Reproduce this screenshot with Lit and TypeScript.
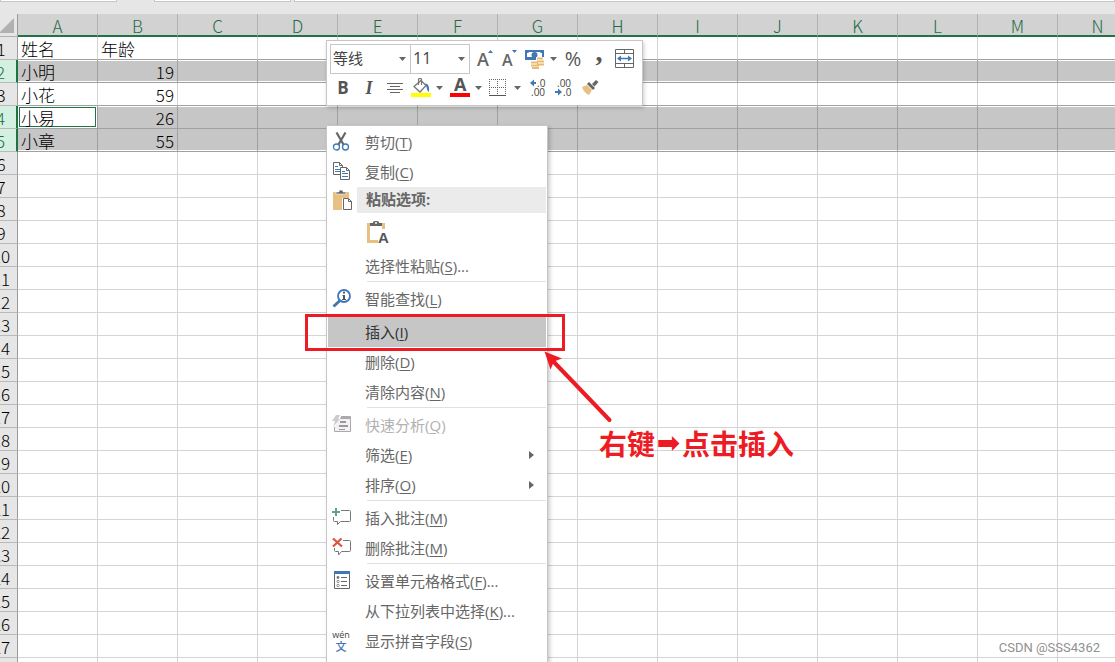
import { LitElement, html, css, svg, nothing } from 'lit';
import { customElement } from 'lit/decorators.js';
import { classMap } from 'lit/directives/class-map.js';

const COLUMNS = 'ABCDEFGHIJKLMN'.split('');
const ROW_COUNT = 27;
const SELECTED = new Set([2, 4, 5]);
const DATA: Record<number, [string, string]> = {
  1: ['姓名', '年龄'],
  2: ['小明', '19'],
  3: ['小花', '59'],
  4: ['小易', '26'],
  5: ['小章', '55'],
};

const icon = (w: number, h: number, body: unknown) =>
  html`<svg width=${w} height=${h} viewBox="0 0 ${w} ${h}" aria-hidden="true">${body}</svg>`;

const caret = () => icon(7, 4, svg`<path d="M0 0H7L3.5 4Z" fill="#666"/>`);

const icons = {
  cut: icon(20, 20, svg`
    <path d="M4.500 .5 11.500 12.500M13.500 .5 6.500 12.500" stroke="#666" stroke-width="2.200" fill="none"/>
    <circle cx="4.500" cy="15" r="3" fill="none" stroke="#3f78b5" stroke-width="1.300"/>
    <circle cx="13.500" cy="15" r="3" fill="none" stroke="#3f78b5" stroke-width="1.300"/>`),
  copy: icon(20, 20, svg`
    <path d="M1.500 .5H7.500L10.500 3.500V12.500H1.500Z" fill="#fff" stroke="#666"/>
    <path d="M7.500 .5V3.500H10.500" fill="none" stroke="#666"/>
    <path d="M3 4.500H6M3 7.500H8M3 9.500H8" stroke="#3f78b5"/>
    <path d="M8.500 5.500H14.500L17.500 8.500V17.500H8.500Z" fill="#fff" stroke="#666"/>
    <path d="M14.500 5.500V8.500H17.500" fill="none" stroke="#666"/>
    <path d="M10 9.500H13M10 11.500H16M10 14.500H16" stroke="#3f78b5"/>`),
  paste: icon(20, 20, svg`
    <path d="M1 2H17V8H10V20H1Z" fill="#e8c081"/>
    <path d="M4 4V2H7V1Q7 0 9 0T11 1V2H14V4Z" fill="#666" stroke="#fff" stroke-width=".6"/>
    <path d="M11.500 8.500H16.500L19.500 11.500V19.500H11.500Z" fill="#fff" stroke="#666"/>
    <path d="M16.500 8.500V11.500H19.500" fill="none" stroke="#666"/>`),
  lookup: icon(20, 20, svg`
    <path d="M1.500 17.500 8 11.500" stroke="#3f78b5" stroke-width="3"/>
    <circle cx="12" cy="7" r="6" fill="#fff" stroke="#3f78b5" stroke-width="1.800"/>
    <path d="M11 2.800H13V4.500H11ZM10.500 6H13V10H14V11H10V10H11V7H10.500Z" fill="#555"/>`),
  analysis: icon(20, 20, svg`
    <path d="M9 1.500H18.500V16.500H2.500V12" fill="#f3f1f3" stroke="#aaa"/>
    <path d="M9 2H18V4H8Z" fill="#aaa"/>
    <path d="M8 6H14V8H8ZM7 10H16V12H7ZM7 14H13V15H7Z" fill="#999"/>
    <path d="M4 0H8L6 4H8L1 12L3 6H0Z" fill="#ccc"/>`),
  addNote: icon(20, 20, svg`
    <path d="M9 2.500H17.500Q18.500 2.500 18.500 3.500V12.500Q18.500 13.500 17.500 13.500H8.500L5.500 16.500V13.500H2.500Q1.500 13.500 1.500 12.500V9" fill="none" stroke="#777"/>
    <path d="M4 0V8M0 4H8" stroke="#5ba58b" stroke-width="2"/>`),
  deleteNote: icon(20, 20, svg`
    <path d="M11 2.500H17.500Q18.500 2.500 18.500 3.500V12.500Q18.500 13.500 17.500 13.500H9.500L6.500 17V13.500H3.500Q2.500 13.500 2.500 12.500V10" fill="none" stroke="#777"/>
    <path d="M1 .5 10 8.500M9.500 .5 1 8.500" stroke="#d9573c" stroke-width="2.200"/>`),
  format: icon(20, 20, svg`
    <path d="M2.500 .5H17.500V17.500H2.500Z" fill="#fff" stroke="#666"/>
    <path d="M2 0H18V3H2Z" fill="#3f78b5"/>
    <path d="M9 6.500H15M9 10.500H15M9 14.500H15" stroke="#666"/>
    <circle cx="6" cy="6.500" r="1.400" fill="#777"/><circle cx="6" cy="10.500" r="1.200" fill="none" stroke="#777" stroke-width=".8"/><circle cx="6" cy="14.500" r="1.200" fill="none" stroke="#777" stroke-width=".8"/>`),
  pasteText: icon(22, 24, svg`
    <path d="M1.500 4V21.500H11M16.500 9V3.500" fill="none" stroke="#e8c081" stroke-width="3"/>
    <path d="M0 3H18V5H0Z" fill="#e8c081"/>
    <path d="M3 6V3H6V2Q6 1 9 1T12 2V3H15V6Z" fill="#666"/>
    <circle cx="9" cy="3" r="1" fill="#fff"/>
    <text x="11" y="23" font-size="15" font-weight="700" fill="#555" font-family="Liberation Sans, sans-serif">A</text>`),
  fontGrow: icon(20, 20, svg`
    <text x="3" y="17" font-size="18" font-weight="600" fill="#666" font-family="Open Sans, sans-serif">A</text>
    <path d="M14 4 16.500 1 19 4Z" fill="#3f78b5"/>`),
  fontShrink: icon(20, 20, svg`
    <text x="2" y="17" font-size="16" font-weight="600" fill="#666" font-family="Open Sans, sans-serif">A</text>
    <path d="M12 1H17L14.500 4Z" fill="#3f78b5"/>`),
  currency: icon(20, 20, svg`
    <path d="M0 1H19V11H0Z" fill="#3f78b5"/>
    <path d="M2 4Q4 4 4 3H15Q15 4 17 4V8H2Z" fill="#fff"/>
    <circle cx="9.500" cy="6" r="3" fill="#3f78b5"/>
    <path d="M5 11H13V20H5Z" fill="#fff"/><path d="M11 8H20V18H11Z" fill="#fff"/>
    <path d="M12 9.500H18M12 12.500H19M12 15.500H19M6 13.500H13M6 16.500H14M7 19H14" stroke="#e8b96f" stroke-width="2"/>`),
  merge: icon(20, 20, svg`
    <path d="M.5 .5H18.500V18.500H.5ZM.5 4.500H18.500M.5 14.500H18.500M9.500 .5V4.500M9.500 14.500V18.500" fill="none" stroke="#666"/>
    <path d="M3 9.500H16" stroke="#3f78b5" stroke-width="1.500"/>
    <path d="M6 6.500 2 9.500 6 12.500ZM13 6.500 17 9.500 13 12.500Z" fill="#3f78b5"/>`),
  align: icon(16, 14, svg`<path d="M0 2.500H16M3 5.500H13M0 8.500H16M3 11.500H13" stroke="#666"/>`),
  fill: icon(20, 20, svg`
    <path d="M0 15H20V19H0Z" fill="#ff0"/>
    <path d="M3 8.500 10 2.500 15 7.500 9 14Z" fill="#fff" stroke="#777" stroke-width="1.300"/>
    <path d="M7.500 7V1Q9 0 10.500 1V7" fill="none" stroke="#777" stroke-width="1.200"/>
    <path d="M14 5.500Q19 5.500 18 14Q16 13 15.500 9Z" fill="#3f78b5"/>`),
  fontColor: icon(20, 20, svg`
    <path d="M0 15H20V19H0Z" fill="#f00"/>
    <text x="4" y="13" font-size="18" font-weight="700" fill="#555" font-family="Open Sans, sans-serif">A</text>`),
  borders: icon(20, 20, svg`
    <path d="M.5 1V17M8.500 1V17M16.500 1V17M0 1.500H17M0 9.500H17" stroke="#666" stroke-dasharray="1 1" fill="none"/>
    <path d="M0 17.500H17" stroke="#555"/>`),
  moreDecimals: icon(18, 20, svg`
    <path d="M1 5 5 1.500V4H7V6H5V8.500Z" fill="#3f78b5"/>
    <text x="8" y="9" font-size="10" fill="#444" font-family="Open Sans, sans-serif">.0</text>
    <text x="2" y="18" font-size="10" fill="#444" font-family="Open Sans, sans-serif">.00</text>`),
  fewerDecimals: icon(18, 20, svg`
    <text x="2" y="9" font-size="10" fill="#444" font-family="Open Sans, sans-serif">.00</text>
    <path d="M7 14 3 10.500V13H0V15H3V17.500Z" fill="#3f78b5"/>
    <text x="8" y="18" font-size="10" fill="#444" font-family="Open Sans, sans-serif">.0</text>`),
  painter: icon(18, 18, svg`
    <path d="M1 8 6 6 11 11 8 16Q3 14 1 8Z" fill="#e8c081"/>
    <path d="M6 5 8 3 14 9 12 11Z" fill="#666"/>
    <path d="M11 5 15 1 17.500 3 13.500 7.500Z" fill="#666"/>`),
  pinyin: html`<span class="pinyin"><span>wén</span><span class="han">文</span></span>`,
};

type Entry =
  | { kind: 'item'; label: string; key: string; tail?: string; icon?: unknown; sub?: boolean; off?: boolean; hot?: boolean }
  | { kind: 'heading' }
  | { kind: 'sep' };

const MENU: Entry[] = [
  { kind: 'item', label: '剪切', key: 'T', icon: icons.cut },
  { kind: 'item', label: '复制', key: 'C', icon: icons.copy },
  { kind: 'heading' },
  { kind: 'item', label: '选择性粘贴', key: 'S', tail: '...' },
  { kind: 'sep' },
  { kind: 'item', label: '智能查找', key: 'L', icon: icons.lookup },
  { kind: 'sep' },
  { kind: 'item', label: '插入', key: 'I', hot: true },
  { kind: 'item', label: '删除', key: 'D' },
  { kind: 'item', label: '清除内容', key: 'N' },
  { kind: 'sep' },
  { kind: 'item', label: '快速分析', key: 'Q', icon: icons.analysis, off: true },
  { kind: 'item', label: '筛选', key: 'E', sub: true },
  { kind: 'item', label: '排序', key: 'O', sub: true },
  { kind: 'sep' },
  { kind: 'item', label: '插入批注', key: 'M', icon: icons.addNote },
  { kind: 'item', label: '删除批注', key: 'M', icon: icons.deleteNote },
  { kind: 'sep' },
  { kind: 'item', label: '设置单元格格式', key: 'F', tail: '...', icon: icons.format },
  { kind: 'item', label: '从下拉列表中选择', key: 'K', tail: '...' },
  { kind: 'item', label: '显示拼音字段', key: 'S', icon: icons.pinyin },
];

@customElement('sheet-grid')
class SheetGrid extends LitElement {
  static styles = css`
    :host { display: block; margin-left: -15px; }
    .grid {
      border-collapse: separate; border-spacing: 0; table-layout: fixed; width: 1153px;
      font: 300 17px/20px "Noto Sans CJK SC", sans-serif; color: #000;
    }
    .row-col { width: 33px; }
    .col { width: 80px; }
    th, td { box-sizing: border-box; padding: 2px 0 0; height: 23px; white-space: nowrap; }
    th { font-weight: 300; }
    .col-head { background: #d2d2d2; color: #1e6b45; border-right: 1px solid #b1b1b1; border-bottom: 2px solid #217346; line-height: 19px; }
    .corner { background: #e6e6e6; border-right: 1px solid #9b9b9b; border-bottom: 1px solid #b1b1b1; text-align: right; }
    .corner svg { display: block; margin-left: auto; margin-right: 3px; }
    .row-head { background: #e6e6e6; border-right: 1px solid #9b9b9b; border-bottom: 1px solid #b9b9b9; }
    .row-head.selected { background: #d3f0e0; color: #1e6b45; border-right: 2px solid #217346; }
    td { border-right: 1px solid #d4d4d4; border-bottom: 1px solid #d4d4d4; padding: 2px 3px 0; }
    td.dark { border-bottom-color: #a0a0a0; }
    td.selected { background: #c6c6c6; border-right-color: #a0a0a0; }
    td.top { box-shadow: inset 0 1px #fff; }
    td.bottom { box-shadow: inset 0 -1px #fff; }
    td.top.bottom { box-shadow: inset 0 1px #fff, inset 0 -1px #fff; }
    td.active { background: #fff; box-shadow: inset 0 0 0 1px #fff, inset 0 0 0 2px #217346; }
    .number { text-align: right; }
    .rest td, .rest th { height: 5px; padding: 0; border-bottom: 0; }
  `;

  render() {
    const rows = Array.from({ length: ROW_COUNT }, (_, i) => i + 1);
    return html`<table class="grid">
      <colgroup><col class="row-col" />${COLUMNS.map(() => html`<col class="col" />`)}</colgroup>
      <thead><tr>
        <th class="corner">${icon(15, 16, svg`<path d="M15 0V15H0Z" fill="#b1b1b1"/>`)}</th>
        ${COLUMNS.map((c) => html`<th class="col-head" scope="col">${c}</th>`)}
      </tr></thead>
      <tbody>${rows.map((r) => {
        const on = SELECTED.has(r);
        const next = SELECTED.has(r + 1);
        return html`<tr>
          <th scope="row" class=${classMap({ 'row-head': true, selected: on })}>${r}</th>
          ${COLUMNS.map((_, c) => html`<td class=${classMap({
            selected: on,
            dark: on || next,
            top: on && !SELECTED.has(r - 1),
            bottom: on && !next,
            active: r === 4 && c === 0,
            number: c === 1 && r > 1,
          })}>${DATA[r]?.[c] ?? nothing}</td>`)}
        </tr>`;
      })}
        <tr class="rest"><th class="row-head"></th>${COLUMNS.map(() => html`<td></td>`)}</tr>
      </tbody>
    </table>`;
  }
}

@customElement('mini-toolbar')
class MiniToolbar extends LitElement {
  static styles = css`
    :host {
      display: flex; flex-direction: column; gap: 1px; box-sizing: border-box;
      background: #fff; border: 1px solid #c6c6c6; box-shadow: 1px 2px 4px rgba(0, 0, 0, .2);
      padding: 3px 2px 4px 3px; color: #555; font-family: "Open Sans", "Noto Sans CJK SC", sans-serif;
    }
    .line { display: flex; align-items: center; height: 30px; }
    .line.second { height: 26px; }
    .combo { display: grid; align-items: center; height: 30px; box-sizing: border-box; border: 1px solid #c6c6c6; }
    .combo + .combo { border-left: 0; }
    .combo select, .combo svg { grid-area: 1 / 1; }
    .combo svg { justify-self: end; margin-right: 4px; pointer-events: none; }
    .name { width: 81px; }
    .size { width: 59px; margin-right: 1px; }
    select {
      appearance: none; width: 100%; height: 28px; border: 0; background: none; padding: 0 2px 2px;
      color: #444; font: 400 15px/24px "Noto Sans CJK SC", sans-serif;
    }
    .size select { font: 400 16px/24px "Open Sans", sans-serif; }
    button {
      display: flex; align-items: center; justify-content: center; width: 26px; height: 26px;
      padding: 0; border: 0; background: none; color: #555; font: 400 20px/24px "Open Sans", sans-serif;
    }
    .split { width: 39px; justify-content: flex-start; padding-left: 3px; gap: 5px; }
    .line.first .split { width: 37px; padding-left: 2px; }
    .bold { font-weight: 700; font-size: 17px; }
    .italic { font: italic 700 18px/24px "Liberation Serif", serif; }
    .comma { font: 700 28px/12px "Liberation Serif", serif; align-items: flex-start; }
  `;

  render() {
    return html`
      <div class="line first">
        <div class="combo name"><select aria-label="字体"><option>等线</option></select>${caret()}</div>
        <div class="combo size"><select aria-label="字号"><option>11</option></select>${caret()}</div>
        <button aria-label="增大字号">${icons.fontGrow}</button>
        <button aria-label="减小字号">${icons.fontShrink}</button>
        <button class="split" aria-label="会计数字格式">${icons.currency}${caret()}</button>
        <button>%</button>
        <button class="comma">,</button>
        <button aria-label="合并后居中">${icons.merge}</button>
      </div>
      <div class="line second">
        <button class="bold">B</button>
        <button class="italic">I</button>
        <button aria-label="居中">${icons.align}</button>
        <button class="split" aria-label="填充颜色">${icons.fill}${caret()}</button>
        <button class="split" aria-label="字体颜色">${icons.fontColor}${caret()}</button>
        <button class="split" aria-label="边框">${icons.borders}${caret()}</button>
        <button aria-label="增加小数位数">${icons.moreDecimals}</button>
        <button aria-label="减少小数位数">${icons.fewerDecimals}</button>
        <button aria-label="格式刷">${icons.painter}</button>
      </div>`;
  }
}

@customElement('context-menu')
class ContextMenu extends LitElement {
  static styles = css`
    :host {
      display: block; box-sizing: border-box; padding: 1px; background: #fff; border: 1px solid #c6c6c6;
      box-shadow: 2px 2px 4px rgba(0, 0, 0, .2); color: #555;
      font: 400 15px/20px "Open Sans", "Noto Sans CJK SC", sans-serif;
    }
    .item {
      display: grid; grid-template-columns: 37px 1fr auto; align-items: center; width: 100%; height: 30px;
      padding: 0 12px 0 0; border: 0; background: none; color: #666; font: inherit; text-align: left;
    }
    .item.hot { background: #c6c6c6; color: #333; }
    .item:disabled { color: #b1b1b1; }
    .icon { display: flex; padding-left: 4px; }
    .key { text-decoration: underline; text-underline-offset: 2px; }
    .sep { height: 3px; box-sizing: border-box; border: 0; border-top: 1px solid #e1e1e1; margin: 0 0 0 39px; }
    .heading { display: grid; grid-template-columns: 29px 1fr; align-items: center; height: 26px; }
    .heading-text { background: #ebebeb; height: 26px; line-height: 24px; padding-left: 9px; font-weight: 700; color: #666; }
    .options { display: flex; align-items: center; height: 38px; padding-left: 39px; }
    .option { display: flex; padding: 0; border: 0; background: none; }
    .pinyin { display: flex; flex-direction: column; align-items: center; width: 18px; font: 400 9px/10px "Open Sans", sans-serif; color: #444; }
    .han { font: 500 11px/12px "Noto Sans CJK SC", sans-serif; color: #3f78b5; }
  `;

  private entry(e: Entry) {
    if (e.kind === 'sep') return html`<hr class="sep" />`;
    if (e.kind === 'heading') {
      return html`
        <div class="heading"><span class="icon">${icons.paste}</span><span class="heading-text">粘贴选项:</span></div>
        <div class="options"><button class="option" aria-label="只保留文本">${icons.pasteText}</button></div>`;
    }
    return html`<button role="menuitem" class=${classMap({ item: true, hot: !!e.hot })} ?disabled=${!!e.off}>
      <span class="icon">${e.icon ?? nothing}</span>
      <span>${e.label}(<span class="key">${e.key}</span>)${e.tail ?? nothing}</span>
      ${e.sub ? icon(5, 8, svg`<path d="M0 0 5 4 0 8Z" fill="#666"/>`) : nothing}
    </button>`;
  }

  render() {
    return html`<div role="menu">${MENU.map((e) => this.entry(e))}</div>`;
  }
}

@customElement('app-root')
class AppRoot extends LitElement {
  static styles = css`
    :host { display: block; position: relative; height: 100vh; overflow: hidden; background: #fff; }
    .formula-bar { display: flex; height: 14px; background: #e6e6e6; }
    .field { box-sizing: border-box; height: 2px; background: #fff; border: 1px solid #c6c6c6; border-width: 0 1px 1px; }
    .name-box { width: 117px; margin-right: 37px; }
    .tools { width: 137px; margin-right: 3px; }
    .formula { flex: 1; }
    .toolbar { position: absolute; left: 326px; top: 40px; width: 317px; }
    .menu { position: absolute; left: 326px; top: 125px; bottom: -8px; width: 222px; }
    .frame { position: absolute; left: 305px; top: 314px; width: 260px; height: 37px; box-sizing: border-box; border: 3px solid #ed1c24; }
    .pointer { position: absolute; left: 540px; top: 348px; }
    .note {
      position: absolute; left: 599px; top: 423px; display: flex; color: #ed1c24; white-space: nowrap;
      font: 700 28px/40px "Noto Sans CJK SC", sans-serif;
    }
    .note-arrow { font-family: "DejaVu Sans", sans-serif; width: 27px; text-align: center; }
    .watermark { position: absolute; right: 15px; bottom: 5px; font: 400 13px/18px Roboto, sans-serif; color: #909090; }
  `;

  render() {
    return html`
      <div class="formula-bar">
        <div class="field name-box"></div>
        <div class="field tools"></div>
        <div class="field formula"></div>
      </div>
      <sheet-grid></sheet-grid>
      <mini-toolbar class="toolbar"></mini-toolbar>
      <context-menu class="menu"></context-menu>
      <div class="frame"></div>
      <div class="pointer">${icon(76, 78, svg`
        <path d="M12 12 69.500 72" stroke="#ed1c24" stroke-width="4" stroke-linecap="round"/>
        <path d="M4.500 3.500 22 10.500 14 13.500 10.500 21.500Z" fill="#ed1c24"/>`)}</div>
      <div class="note"><span>右键</span><span class="note-arrow">➡</span><span>点击插入</span></div>
      <div class="watermark">CSDN @SSS4362</div>`;
  }
}
